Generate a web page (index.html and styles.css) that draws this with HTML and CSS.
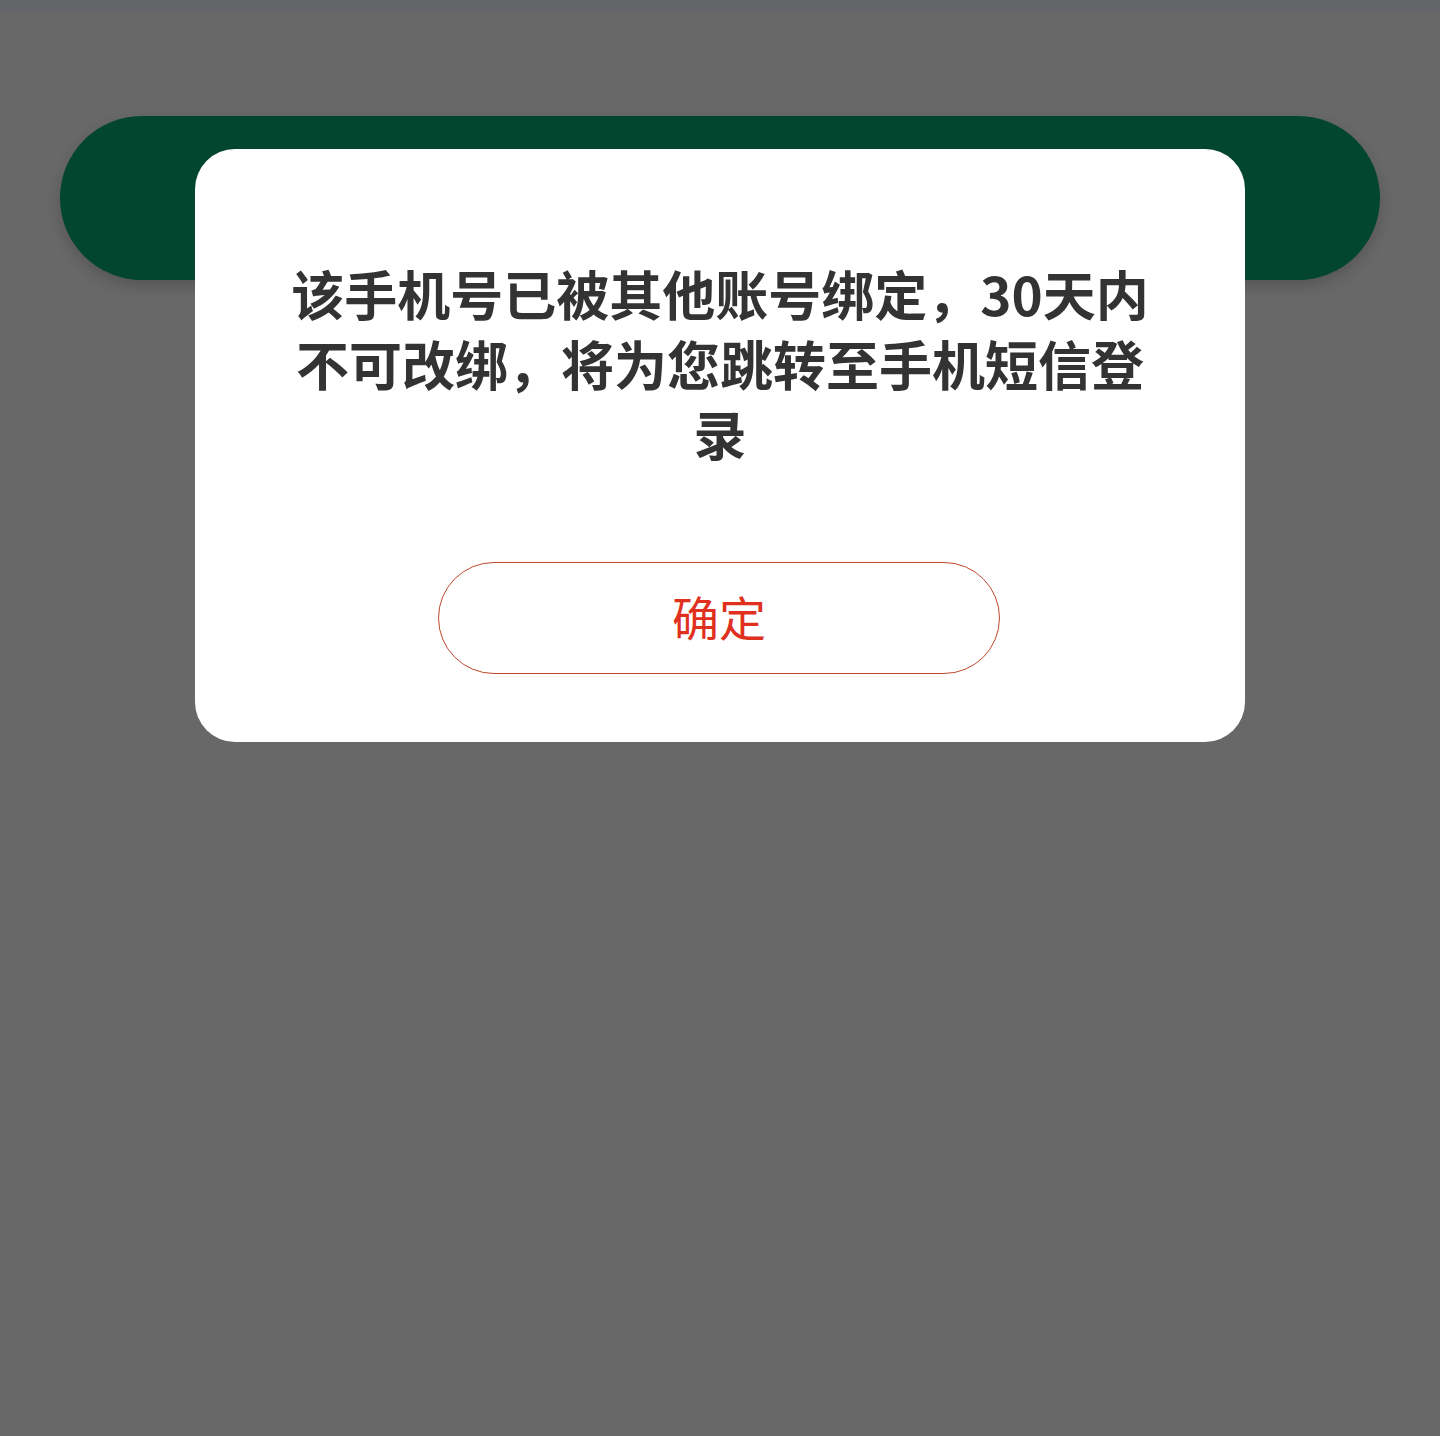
FILE: index.html
```html
<!DOCTYPE html>
<html lang="zh-CN">
<head>
<meta charset="utf-8">
<title>提示</title>
<link rel="stylesheet" href="styles.css">
</head>
<body>
<div class="page">
  <div class="status-strip"></div>
  <div class="green-bar"></div>
</div>
<div class="overlay">
  <div class="dialog">
    <p class="message">该手机号已被其他账号绑定，30天内不可改绑，将为您跳转至手机短信登录</p>
    <button class="confirm" type="button">确定</button>
  </div>
</div>
</body>
</html>
```
FILE: styles.css
```css
html, body {
  margin: 0;
  padding: 0;
}
body {
  width: 1440px;
  height: 1436px;
  background: #686868;
  font-family: "Noto Sans CJK SC", "Noto Sans", sans-serif;
  position: relative;
  overflow: hidden;
}
.page {
  display: flex;
  flex-direction: column;
}
.status-strip {
  height: 12px;
  background: #646568;
}
.green-bar {
  margin: 104px 0 0 60px;
  width: 1320px;
  height: 164px;
  border-radius: 82px;
  background: #03462f;
  box-shadow: 0 6px 14px rgba(0, 0, 0, 0.18);
}
.overlay {
  position: absolute;
  inset: 0;
  display: flex;
  justify-content: center;
  align-items: flex-start;
  padding-top: 149px;
}
.dialog {
  width: 1050px;
  box-sizing: border-box;
  background: #ffffff;
  border-radius: 40px;
  padding: 109px 90px 68px;
  display: flex;
  flex-direction: column;
  align-items: center;
}
.message {
  margin: 0;
  font-size: 53px;
  line-height: 70px;
  font-weight: 700;
  color: #333333;
  text-align: center;
}
.confirm {
  margin-top: 94px;
  width: 562px;
  height: 112px;
  box-sizing: border-box;
  border: 1.5px solid #c0482e;
  border-radius: 56px;
  background: #ffffff;
  color: #e0301e;
  font-family: "Noto Sans CJK SC", "Noto Sans", sans-serif;
  font-size: 47px;
  font-weight: 400;
  padding: 0 0 6px;
  transform: translateX(-1px);
}
```
